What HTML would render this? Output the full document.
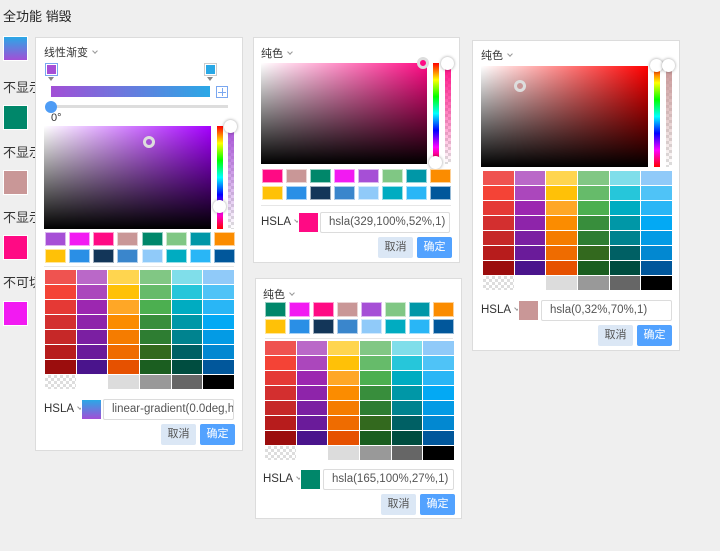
<!DOCTYPE html>
<html><head><meta charset="utf-8">
<style>
*{box-sizing:border-box;margin:0;padding:0}
body{width:720px;height:551px;background:#efefef;position:relative;overflow:hidden;font-family:"Liberation Sans","Noto Sans CJK SC",sans-serif;font-size:12px;color:#333}
.a{position:absolute}
.panel{position:absolute;background:#fff;border:1px solid #dcdcdc}
.t{position:absolute;font-size:11px;color:#333;white-space:nowrap}
.cv{display:inline-block;width:4px;height:4px;border-right:1px solid #999;border-bottom:1px solid #999;transform:rotate(45deg);margin-left:5px;vertical-align:3px}
.chk{background-color:#fff;background-image:linear-gradient(45deg,#ddd 25%,transparent 25%,transparent 75%,#ddd 75%),linear-gradient(45deg,#ddd 25%,transparent 25%,transparent 75%,#ddd 75%);background-size:6px 6px;background-position:0 0,3px 3px}
.inp{position:absolute;border:1px solid #dcdcdc;border-radius:2px;font-size:11.5px;color:#555;padding-left:8px;line-height:19px;white-space:nowrap;overflow:hidden;background:#fff}
.btn{position:absolute;border-radius:2px;font-size:11px;text-align:center}
.knob{position:absolute;width:13px;height:13px;border-radius:50%;background:#fff;box-shadow:0 0 3px rgba(0,0,0,.4)}
</style></head><body>
<div class="a" style="left:3px;top:6px;font-size:13px;color:#222">全功能 销毁</div>
<div class="a" style="left:3px;top:36px;width:25px;height:25px;border:1px solid #fff;background:linear-gradient(#2aa8e6,#a24fd6)"></div>
<div class="a" style="left:3px;top:77px;font-size:13px">不显示</div>
<div class="a" style="left:3px;top:105px;width:25px;height:25px;border:1px solid #fff;background:#00876a"></div>
<div class="a" style="left:3px;top:142px;font-size:13px">不显示</div>
<div class="a" style="left:3px;top:170px;width:25px;height:25px;border:1px solid #fff;background:#c99797"></div>
<div class="a" style="left:3px;top:207px;font-size:13px">不显示</div>
<div class="a" style="left:3px;top:235px;width:25px;height:25px;border:1px solid #fff;background:#ff0a84"></div>
<div class="a" style="left:3px;top:272px;font-size:13px">不可切</div>
<div class="a" style="left:3px;top:301px;width:25px;height:25px;border:1px solid #fff;background:#f21af2"></div>
<div id="root"></div>
<script>
var R=document.getElementById('root');
function d(x,y,w,h,st,cls,txt,html){var e=document.createElement('div');e.className=cls||'a';e.style.cssText='left:'+x+'px;top:'+y+'px;'+(w!=null?'width:'+w+'px;':'')+(h!=null?'height:'+h+'px;':'')+(st||'');if(html)e.innerHTML=html;else if(txt)e.textContent=txt;R.appendChild(e);return e;}
var G=[['#ef5350','#f44336','#e53935','#d32f2f','#c62828','#b71c1c','#9b0d0d'],
['#ba68c8','#ab47bc','#9c27b0','#8e24aa','#7b1fa2','#6a1b9a','#4a148c'],
['#ffd54f','#ffc107','#ffa726','#fb8c00','#f57c00','#ef6c00','#e65100'],
['#81c784','#66bb6a','#4caf50','#388e3c','#2e7d32','#33691e','#1b5e20'],
['#80deea','#26c6da','#00acc1','#0097a7','#00838f','#006064','#004d40'],
['#90caf9','#4fc3f7','#29b6f6','#03a9f4','#039be5','#0288d1','#01579b']];
var GR=['chk','#fff','#dcdcdc','#999','#666','#000'];
function grid(x,y,w,h){var cw=w/6,ch=h/8;for(var c=0;c<6;c++){for(var r=0;r<7;r++)d(x+c*cw,y+r*ch,cw-1,ch-1,'background:'+G[c][r]);var g=GR[c];if(g=='chk')d(x+c*cw,y+7*ch,cw-1,ch-1,'',"a chk");else d(x+c*cw,y+7*ch,cw-1,ch-1,'background:'+g);}}
function sw(x,y,w,row,h){var p=(w-20)/7;for(var i=0;i<8;i++)d(x+i*p,y,21,h,'background:'+row[i]+';border:1px solid rgba(255,255,255,.6)');}
var R2=['#ffc107','#2a8fe6','#133659','#3a86cc','#90caf9','#00acc1','#29b6f6','#01579b'];
function sat(x,y,w,h,hue){d(x,y,w,h,'background:linear-gradient(to top,#000,rgba(0,0,0,0)),linear-gradient(to right,#fff,'+hue+')');}
function hueb(x,y,h){d(x,y,6,h,'background:linear-gradient(red,#ff0,#0f0,#0ff,#00f,#f0f,red)');}
function alpha(x,y,h,c){d(x,y,6,h,'','a chk');d(x,y,6,h,'background:linear-gradient('+c+',rgba(255,255,255,0))');}
function title(x,y,t){d(x,y,null,null,'','t',null,t+'<span class="cv"></span>');}
function foot(x,y,sx,ix,iw,col,txt,bx){d(x,y+4,null,null,'font-size:11.5px;color:#333','t',null,'HSLA<span class="cv" style="margin-left:4px"></span>');var s=d(sx,y,21,21,'background:'+col+';border:1px solid #fff;');d(ix,y,iw,21,'','inp',txt);d(bx,y+25,35,21,'background:#dbe7f5;color:#555;line-height:21px','btn','取消');d(bx+39,y+25,35,21,'background:#52a2ff;color:#fff;line-height:21px','btn','确定');return s;}
// Panel1
d(35,37,208,414,'','panel');
title(44,44,'线性渐变');
d(45,63,13,13,'border:1px solid #7aa7f0;background:#fff');d(47,65,9,9,'background:#a64fd6');
d(204,63,13,13,'border:1px solid #ccc;background:#fff');d(206,65,9,9,'background:#29a8e6');
d(48,77,0,0,'border-left:3px solid transparent;border-right:3px solid transparent;border-top:4px solid #888');
d(207,77,0,0,'border-left:3px solid transparent;border-right:3px solid transparent;border-top:4px solid #888');
d(51,86,159,11,'background:linear-gradient(to right,#a24fd6,#2aa8e6)');
d(216,86,12,12,'border:1px solid #7aa7f0;background:linear-gradient(#7aa7f0,#7aa7f0) center/1px 8px no-repeat,linear-gradient(#7aa7f0,#7aa7f0) center/8px 1px no-repeat');
d(50,105,178,3,'background:#ddd');d(45,101,12,12,'background:#4e9cf5;border-radius:50%');
d(51,112,null,null,'color:#333','t','0°');
sat(44,126,167,103,'#a500ff');
d(143,136,12,12,'border:3px solid #ddd;border-radius:50%;background:#a64fd6');
hueb(217,126,103);alpha(228,126,103,'#a64fd6');
d(224,120,13,13,'','knob');d(213,200,13,13,'','knob');
sw(45,232,189,['#a64fd6','#f21af2','#ff0a84','#c99797','#00876a','#80c784','#0097a7','#fb8c00'],14);
sw(45,249,189,R2,14);
d(44,266,190,1,'background:#e6e6e6');
grid(45,270,190,120);
var s1=foot(44,399,81,103,131,'#000','linear-gradient(0.0deg,hsla',161);
s1.style.background='linear-gradient(#2aa8e6,#a24fd6)';
// Panel2
d(253,37,207,226,'','panel');
title(261,45,'纯色');
sat(261,63,166,101,'#ff0a84');
d(417,57,12,12,'border:3px solid #ddd;border-radius:50%;background:#ff0a84');
hueb(433,63,101);alpha(445,63,101,'#ff0a84');
d(429,156,13,13,'','knob');d(441,57,13,13,'','knob');
sw(262,169,188,['#ff0a84','#c99797','#00876a','#f21af2','#a64fd6','#80c784','#0097a7','#fb8c00'],14);
sw(262,186,188,R2,14);
d(261,205,190,1,'background:#e6e6e6');
foot(261,212,298,320,130,'#ff0a84','hsla(329,100%,52%,1)',378);
// Panel3
d(472,40,208,311,'','panel');
title(481,47,'纯色');
sat(481,66,167,101,'#ff0000');
d(514,80,12,12,'border:3px solid #ddd;border-radius:50%;background:#c99797');
hueb(654,66,101);alpha(666,66,101,'#c99797');
d(650,59,13,13,'','knob');d(662,59,13,13,'','knob');
grid(483,171,190,120);
foot(481,300,518,541,131,'#c99797','hsla(0,32%,70%,1)',598);
// Panel4
d(255,278,207,241,'','panel');
title(263,286,'纯色');
sw(265,302,188,['#00876a','#f21af2','#ff0a84','#c99797','#a64fd6','#80c784','#0097a7','#fb8c00'],15);
sw(265,319,188,R2,15);
d(265,338,188,1,'background:#e6e6e6');
grid(265,341,190,120);
foot(263,469,300,323,131,'#00876a','hsla(165,100%,27%,1)',381);
</script>
</body></html>
